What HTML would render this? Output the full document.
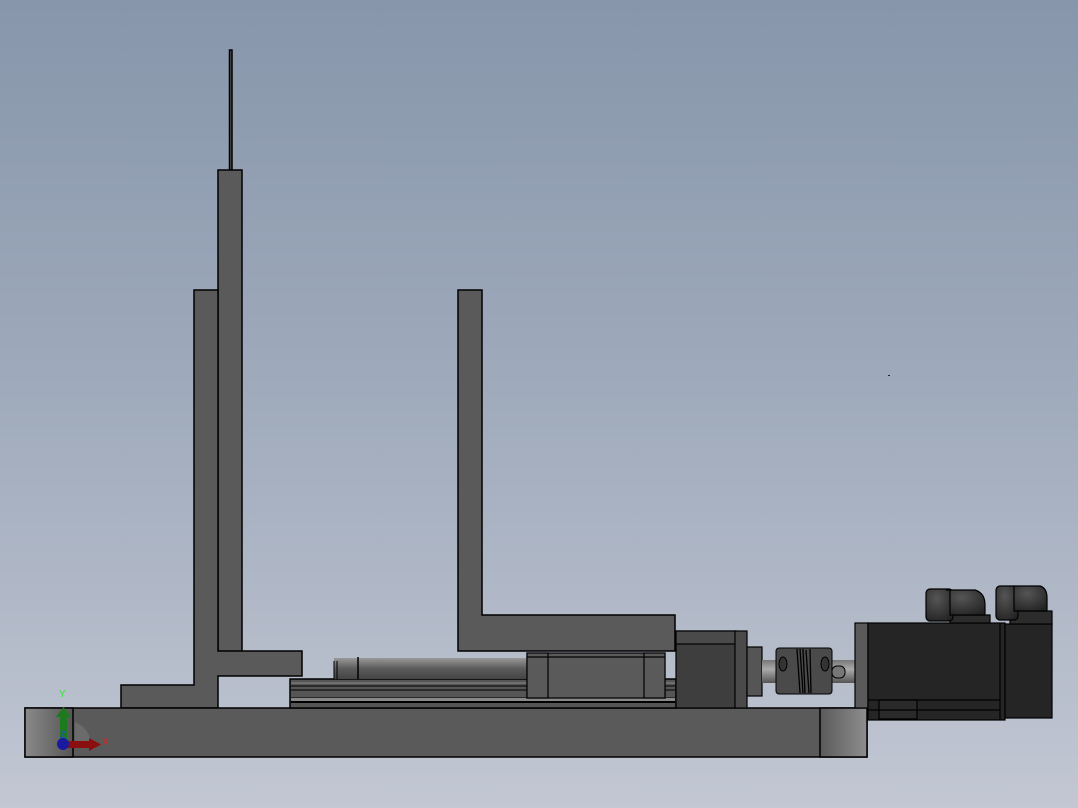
<!DOCTYPE html>
<html><head><meta charset="utf-8"><style>
html,body{margin:0;padding:0;width:1078px;height:808px;overflow:hidden}
</style></head><body>
<svg width="1078" height="808" viewBox="0 0 1078 808" xmlns="http://www.w3.org/2000/svg">
<defs>
<linearGradient id="bg" x1="0" y1="0" x2="0" y2="1">
<stop offset="0" stop-color="#8796ab"/><stop offset="0.5" stop-color="#a0abbc"/><stop offset="1" stop-color="#c2c7d3"/>
</linearGradient>
<linearGradient id="lend" x1="0" y1="0" x2="1" y2="0">
<stop offset="0" stop-color="#8a8a8a"/><stop offset="1" stop-color="#555"/>
</linearGradient>
<linearGradient id="rend" x1="0" y1="0" x2="1" y2="0">
<stop offset="0" stop-color="#5a5a5a"/><stop offset="1" stop-color="#8e8e8e"/>
</linearGradient>
<linearGradient id="cyl" x1="0" y1="0" x2="0" y2="1">
<stop offset="0" stop-color="#999"/><stop offset="0.5" stop-color="#5c5c5c"/><stop offset="1" stop-color="#444"/>
</linearGradient>
<linearGradient id="shaft" x1="0" y1="0" x2="0" y2="1">
<stop offset="0" stop-color="#777"/><stop offset="0.4" stop-color="#aaa"/><stop offset="1" stop-color="#555"/>
</linearGradient>
<radialGradient id="conn" cx="0.4" cy="0.3" r="0.8">
<stop offset="0" stop-color="#555"/><stop offset="1" stop-color="#222"/>
</radialGradient>
</defs>
<rect width="1078" height="808" fill="url(#bg)"/>
<g stroke="#000" stroke-width="1.5" fill="#5a5a5a">
<!-- rod -->
<rect x="229.5" y="50" width="2.5" height="120" fill="#555"/>
<!-- tall column -->
<rect x="218" y="170" width="24" height="482"/>
<!-- left column + foot -->
<path d="M194 290 H218 V651 H302 V676 H218 V708 H121 V685 H194 Z"/>
<!-- right L -->
<path d="M458 290 H482 V615 H675 V651 H458 Z"/>
<!-- base plate -->
<rect x="25" y="708" width="842" height="49"/>
<rect x="25" y="708" width="48" height="49" fill="url(#lend)"/>
<rect x="820" y="708" width="47" height="49" fill="url(#rend)"/>
<!-- rail -->
<rect x="290" y="679" width="386" height="29" fill="#555"/>
</g>
<g stroke="#000" stroke-width="1">
<line x1="291" y1="683" x2="675" y2="683" stroke="#888"/>
<line x1="291" y1="686" x2="675" y2="686"/>
<line x1="291" y1="690" x2="675" y2="690"/>
<line x1="291" y1="698" x2="675" y2="698"/>
<rect x="291" y="698" width="384" height="4" fill="#888" stroke="none"/>
<line x1="291" y1="702" x2="675" y2="702" stroke-width="2"/>
</g>
<!-- cylinder -->
<rect x="334" y="658" width="194" height="21" fill="url(#cyl)"/>
<line x1="334" y1="661" x2="334" y2="679" stroke="#000" stroke-width="1"/>
<line x1="337" y1="661" x2="337" y2="679" stroke="#000" stroke-width="1"/>
<line x1="358" y1="657" x2="358" y2="679" stroke="#000" stroke-width="1.5"/>
<!-- carriage -->
<g stroke="#000" stroke-width="1.2" fill="#5a5a5a">
<rect x="527" y="653" width="138" height="45"/>
<rect x="527" y="653" width="21" height="45"/>
<rect x="644" y="653" width="21" height="45"/>
<line x1="527" y1="657" x2="665" y2="657"/>
<!-- motor block -->
<rect x="676" y="631" width="60" height="77" fill="#3e3e3e"/>
<rect x="676" y="631" width="60" height="13" fill="#4a4a4a"/>
<rect x="735" y="631" width="12" height="77" fill="#4a4a4a"/>
<rect x="747" y="647" width="15" height="49" fill="#555"/>
</g>
<!-- shaft -->
<rect x="762" y="660" width="94" height="23" fill="url(#shaft)"/>
<!-- coupling -->
<g stroke="#000" stroke-width="1" fill="#4a4a4a">
<rect x="776" y="648" width="56" height="46" rx="3"/>
<path d="M797 649 L800 693 M800 649 L803 693 M803 649 L805 693 M806 650 L809 693 M810 649 L811 693" stroke-width="1.3"/>
<ellipse cx="783" cy="664" rx="4" ry="7" fill="#333"/>
<ellipse cx="825" cy="664" rx="4" ry="7" fill="#333"/>
<rect x="832" y="666" width="13" height="12" rx="5" fill="#777"/>
</g>
<!-- motor -->
<g stroke="#000" stroke-width="1.2">
<rect x="855" y="623" width="13" height="85" fill="#5a5a5a"/>
<rect x="868" y="623" width="137" height="97" fill="#252525"/>
<rect x="1005" y="624" width="47" height="94" fill="#252525"/>
<line x1="1000" y1="623" x2="1000" y2="720"/>
<rect x="879" y="700" width="38" height="19" fill="#2a2a2a"/>
<line x1="868" y1="700" x2="1000" y2="700"/>
<line x1="868" y1="710" x2="1000" y2="710"/>
<!-- connectors -->
<rect x="950" y="615" width="40" height="8" fill="#2c2c2c"/>
<rect x="926" y="589" width="27" height="32" rx="4" fill="url(#conn)"/>
<path d="M946 590 H975 Q985 593 985 605 V615 H950 V590 Z" fill="url(#conn)"/>
<rect x="1010" y="611" width="42" height="13" fill="#2c2c2c"/>
<rect x="996" y="586" width="22" height="34" rx="4" fill="url(#conn)"/>
<path d="M1014 586 H1040 Q1047 588 1047 598 V611 H1014 Z" fill="url(#conn)"/>
</g>
<!-- small dot -->
<rect x="888" y="375" width="2" height="1" fill="#222"/>
<!-- axis triad -->
<path d="M75 722 A25 25 0 0 1 91 744 L75 744 Z" fill="#777" opacity="0.6"/>
<rect x="60" y="717" width="7" height="27" fill="#1e7a1e"/>
<polygon points="56,717 71,717 63.5,707" fill="#1e7a1e"/>
<rect x="64" y="741" width="26" height="7" fill="#8b0f0f"/>
<polygon points="89,738 89,751 101,744.5" fill="#8b0f0f"/>
<circle cx="63" cy="744" r="6" fill="#1a1aa0"/>
<text x="59" y="697" font-family="Liberation Sans, sans-serif" font-size="10" fill="#2ee82e">Y</text>
<text x="102" y="745" font-family="Liberation Sans, sans-serif" font-size="10" fill="#e02020">X</text>
<text x="60" y="738" font-family="Liberation Sans, sans-serif" font-size="9" fill="#2040ff">Z</text>
</svg>
</body></html>
